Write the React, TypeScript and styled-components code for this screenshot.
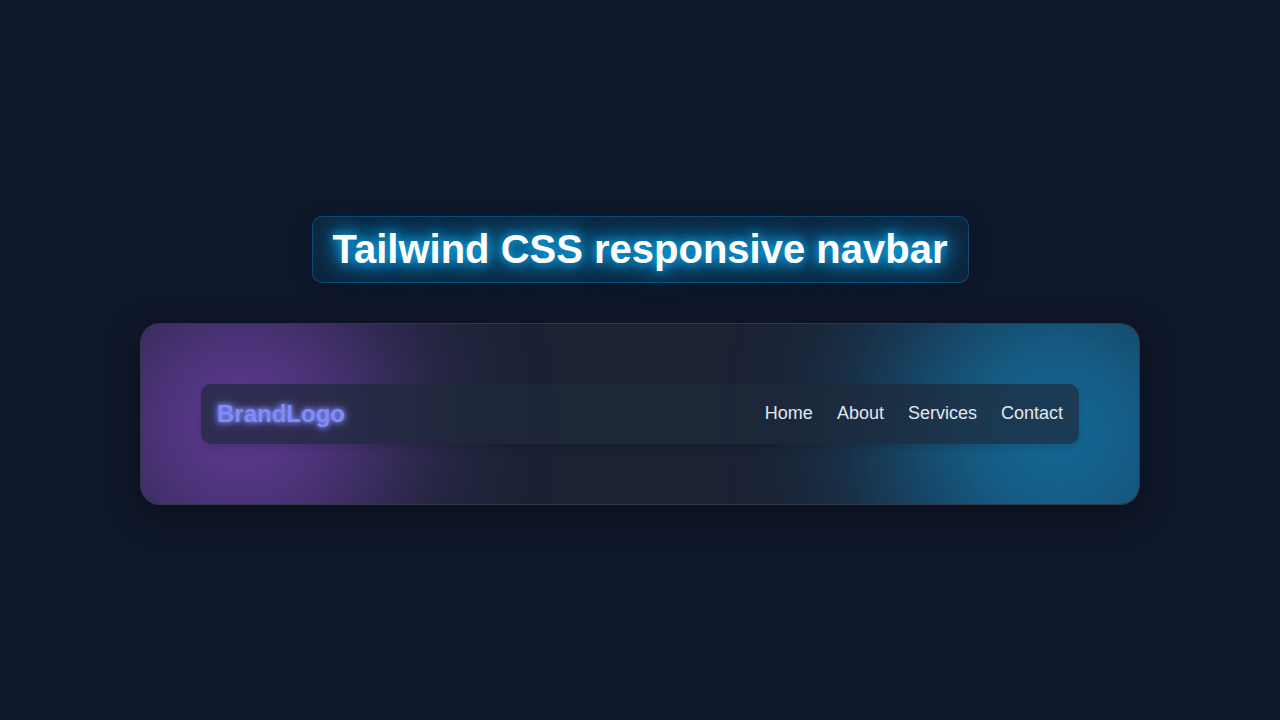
import React from "react";
import styled, { createGlobalStyle } from "styled-components";

const GlobalStyle = createGlobalStyle`
  *, *::before, *::after { box-sizing: border-box; }
  body {
    margin: 0;
    background: #0f172a;
    font-family: "Liberation Sans", Arial, sans-serif;
  }
`;

const Page = styled.main`
  min-height: 100vh;
  display: flex;
  flex-direction: column;
  align-items: center;
  justify-content: center;
  gap: 40px;
  padding: 20px;
`;

const Title = styled.h1`
  margin: 0;
  padding: 10px 20px;
  border: 1px solid rgba(14, 165, 233, 0.3);
  border-radius: 10px;
  background: rgba(14, 165, 233, 0.1);
  color: #fff;
  font-size: 40px;
  line-height: 45px;
  font-weight: 700;
  text-align: center;
  text-shadow: 0 0 10px #0ea5e9, 0 0 20px #0ea5e9, 0 0 30px #0ea5e9;
  box-shadow: 0 4px 20px rgba(0, 0, 0, 0.15);
`;

const Stage = styled.section`
  position: relative;
  isolation: isolate;
  overflow: hidden;
  width: 100%;
  max-width: 1000px;
  padding: 60px;
  border: 1px solid rgba(255, 255, 255, 0.1);
  border-radius: 20px;
  background: rgba(255, 255, 255, 0.05);
`;

const StageShadow = styled.div`
  width: 100%;
  max-width: 1000px;
  border-radius: 20px;
  box-shadow: 0 8px 32px rgba(0, 0, 0, 0.37);
`;

const Glow = styled.div<{ $side: "left" | "right" }>`
  position: absolute;
  z-index: -1;
  border-radius: 50%;
  filter: blur(80px);
  ${({ $side }) =>
    $side === "left"
      ? "top: -50px; left: -50px; width: 300px; height: 300px; background: #a855f7; opacity: 0.5;"
      : "bottom: -100px; right: -90px; width: 340px; height: 340px; background: #0ea5e9; opacity: 0.55;"}
`;

const Nav = styled.nav`
  display: flex;
  align-items: center;
  justify-content: space-between;
  padding: 16px;
  border-radius: 10px;
  background: rgba(30, 41, 59, 0.7);
  box-shadow: 0 4px 6px rgba(0, 0, 0, 0.1);
`;

const Brand = styled.a`
  color: #818cf8;
  font-size: 24px;
  line-height: 28px;
  font-weight: 700;
  text-decoration: none;
  text-shadow: 0 0 5px #818cf8, 0 0 10px #818cf8;
`;

const Links = styled.ul`
  display: flex;
  gap: 24px;
  margin: 0;
  padding: 0;
  list-style: none;
`;

const NavLink = styled.a`
  display: block;
  color: #e2e8f0;
  font-size: 18px;
  line-height: 27px;
  text-decoration: none;
`;

const items = ["Home", "About", "Services", "Contact"];

export default function App() {
  return (
    <>
      <GlobalStyle />
      <Page>
        <Title>Tailwind CSS responsive navbar</Title>
        <StageShadow>
          <Stage>
            <Glow $side="left" />
            <Glow $side="right" />
            <Nav>
              <Brand href="#">BrandLogo</Brand>
              <Links>
                {items.map((item) => (
                  <li key={item}>
                    <NavLink href={"#" + item.toLowerCase()}>{item}</NavLink>
                  </li>
                ))}
              </Links>
            </Nav>
          </Stage>
        </StageShadow>
      </Page>
    </>
  );
}
